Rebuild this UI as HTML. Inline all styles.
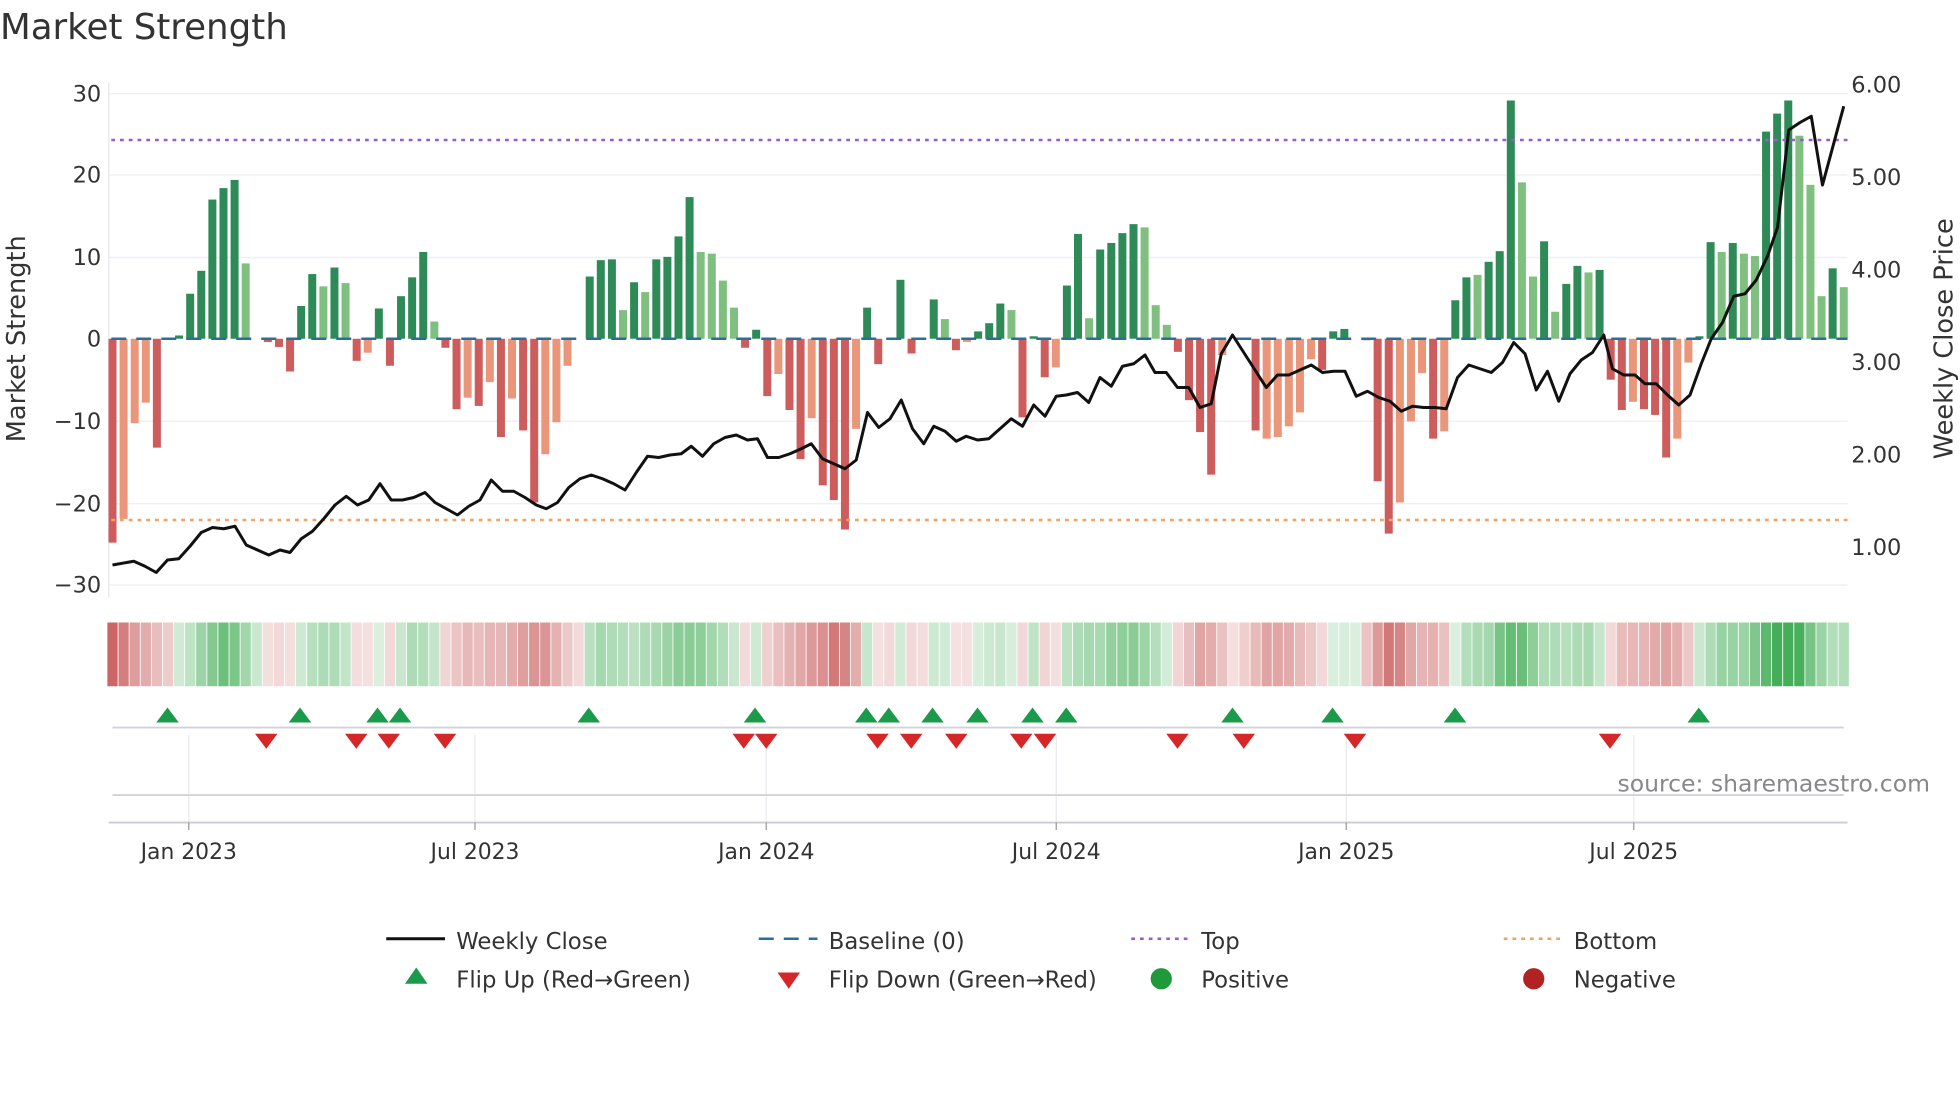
<!DOCTYPE html>
<html><head><meta charset="utf-8"><style>
html,body{margin:0;padding:0;background:#fff;}
svg{display:block;font-family:"DejaVu Sans","Liberation Sans",sans-serif;}
</style></head><body>
<svg id="c" width="1960" height="1102" viewBox="0 0 1568 881.6" xmlns="http://www.w3.org/2000/svg">
<rect width="1568" height="882" fill="#fff"/>
<text x="0" y="31" font-size="28.5" fill="#333">Market Strength</text>
<g stroke="#eef0f4" stroke-width="1.2">
<line x1="87" x2="1478" y1="75" y2="75"/><line x1="87" x2="1478" y1="140" y2="140"/><line x1="87" x2="1478" y1="206" y2="206"/>
<line x1="87" x2="1478" y1="337" y2="337"/><line x1="87" x2="1478" y1="403" y2="403"/><line x1="87" x2="1478" y1="468" y2="468"/>
</g>
<line x1="87" x2="87" y1="66" y2="478" stroke="#e6e8ec"/>
<g font-size="18" fill="#333" text-anchor="end">
<text x="81" y="81">30</text><text x="81" y="146">20</text><text x="81" y="212">10</text><text x="81" y="277">0</text>
<text x="81" y="343">−10</text><text x="81" y="409">−20</text><text x="81" y="474">−30</text>
</g>
<g font-size="18" fill="#333">
<text x="1481" y="74">6.00</text><text x="1481" y="148">5.00</text><text x="1481" y="222">4.00</text><text x="1481" y="296">3.00</text><text x="1481" y="370">2.00</text><text x="1481" y="444">1.00</text>
</g>
<text transform="translate(20,271) rotate(-90)" font-size="20.5" fill="#333" text-anchor="middle">Market Strength</text>
<text transform="translate(1562,271) rotate(-90)" font-size="20.5" fill="#333" text-anchor="middle">Weekly Close Price</text>
<g id="bars"></g>
<line x1="89" x2="1478" y1="271" y2="271" stroke="#2a6f97" stroke-width="2" stroke-dasharray="12 8"/>
<line x1="89" x2="1478" y1="112" y2="112" stroke="#9b59d6" stroke-width="2" stroke-dasharray="3 4"/>
<line x1="89" x2="1478" y1="416" y2="416" stroke="#f0a060" stroke-width="2" stroke-dasharray="3 4"/>
<polyline id="price" fill="none" stroke="#111" stroke-width="2.4" stroke-linejoin="round"/>
<g id="strip"></g>
<g stroke="#e8eaee" stroke-width="1">
<line x1="151" x2="151" y1="588" y2="660"/><line x1="380" x2="380" y1="588" y2="660"/><line x1="613" x2="613" y1="588" y2="660"/>
<line x1="845" x2="845" y1="588" y2="660"/><line x1="1077" x2="1077" y1="588" y2="660"/><line x1="1307" x2="1307" y1="588" y2="660"/>
</g>
<line x1="90" x2="1475" y1="582" y2="582" stroke="#d0d3d8" stroke-width="1.5"/>
<line x1="90" x2="1475" y1="636" y2="636" stroke="#d0d3d8" stroke-width="1.5"/>
<line x1="87" x2="1478" y1="658" y2="658" stroke="#c8cbd0" stroke-width="1.5"/>
<g stroke="#999" stroke-width="1"><line x1="151" x2="151" y1="658" y2="664"/><line x1="380" x2="380" y1="658" y2="664"/><line x1="613" x2="613" y1="658" y2="664"/><line x1="845" x2="845" y1="658" y2="664"/><line x1="1077" x2="1077" y1="658" y2="664"/><line x1="1307" x2="1307" y1="658" y2="664"/></g>
<g id="marks"></g>
<text x="1544" y="633" font-size="18.8" fill="#888" text-anchor="end">source: sharemaestro.com</text>
<g font-size="17.5" fill="#333" text-anchor="middle">
<text x="151" y="687">Jan 2023</text><text x="380" y="687">Jul 2023</text><text x="613" y="687">Jan 2024</text>
<text x="845" y="687">Jul 2024</text><text x="1077" y="687">Jan 2025</text><text x="1307" y="687">Jul 2025</text>
</g>
<g font-size="18.2" fill="#333">
<line x1="309" x2="356" y1="751" y2="751" stroke="#111" stroke-width="2.4"/><text x="365" y="759">Weekly Close</text>
<line x1="607" x2="654" y1="751" y2="751" stroke="#2a6f97" stroke-width="2" stroke-dasharray="12 8"/><text x="663" y="759">Baseline (0)</text>
<line x1="905" x2="952" y1="751" y2="751" stroke="#9b59d6" stroke-width="2" stroke-dasharray="3 4"/><text x="961" y="759">Top</text>
<line x1="1203" x2="1250" y1="751" y2="751" stroke="#f0a060" stroke-width="2" stroke-dasharray="3 4"/><text x="1259" y="759">Bottom</text>
<polygon points="333,774 342,787 324,787" fill="#1a9a4a"/><text x="365" y="790">Flip Up (Red→Green)</text>
<polygon points="622,778 640,778 631,791" fill="#d62728"/><text x="663" y="790">Flip Down (Green→Red)</text>
<circle cx="929" cy="783" r="8.5" fill="#1f9a3a"/><text x="961" y="790">Positive</text>
<circle cx="1227" cy="783" r="8.5" fill="#b22222"/><text x="1259" y="790">Negative</text>
</g>
</svg>
<script>
var V=[[-24.9,'dr'],[-22,'lr'],[-10.3,'lr'],[-7.8,'lr'],[-13.3,'dr'],[0,'z'],[0.4,'dg'],[5.5,'dg'],[8.3,'dg'],[17,'dg'],[18.4,'dg'],[19.4,'dg'],[9.2,'lg'],[0,'z'],[-0.4,'dr'],[-1,'dr'],[-4,'dr'],[4,'dg'],[7.9,'dg'],[6.4,'lg'],[8.7,'dg'],[6.8,'lg'],[-2.7,'dr'],[-1.7,'lr'],[3.7,'dg'],[-3.3,'dr'],[5.2,'dg'],[7.5,'dg'],[10.6,'dg'],[2.1,'lg'],[-1.1,'dr'],[-8.6,'dr'],[-7.2,'lr'],[-8.2,'dr'],[-5.3,'lr'],[-12,'dr'],[-7.3,'lr'],[-11.2,'dr'],[-20,'dr'],[-14.1,'lr'],[-10.2,'lr'],[-3.3,'lr'],[0,'z'],[7.6,'dg'],[9.6,'dg'],[9.7,'dg'],[3.5,'lg'],[6.9,'dg'],[5.7,'lg'],[9.7,'dg'],[10,'dg'],[12.5,'dg'],[17.3,'dg'],[10.6,'lg'],[10.4,'lg'],[7.1,'lg'],[3.8,'lg'],[-1.1,'dr'],[1.1,'dg'],[-7,'dr'],[-4.3,'lr'],[-8.7,'dr'],[-14.7,'dr'],[-9.7,'lr'],[-17.9,'dr'],[-19.7,'dr'],[-23.3,'dr'],[-11,'lr'],[3.8,'dg'],[-3.1,'dr'],[0,'z'],[7.2,'dg'],[-1.8,'dr'],[0,'z'],[4.8,'dg'],[2.4,'lg'],[-1.4,'dr'],[-0.4,'lr'],[0.9,'dg'],[1.9,'dg'],[4.3,'dg'],[3.5,'lg'],[-9.6,'dr'],[0.3,'dg'],[-4.7,'dr'],[-3.5,'lr'],[6.5,'dg'],[12.8,'dg'],[2.5,'lg'],[10.9,'dg'],[11.7,'dg'],[12.9,'dg'],[14,'dg'],[13.6,'lg'],[4.1,'lg'],[1.7,'lg'],[-1.6,'dr'],[-7.5,'dr'],[-11.4,'dr'],[-16.6,'dr'],[-2,'lr'],[0,'z'],[0,'z'],[-11.2,'dr'],[-12.2,'lr'],[-12,'lr'],[-10.7,'lr'],[-9,'lr'],[-2.5,'lr'],[-3.8,'dr'],[0.9,'dg'],[1.2,'dg'],[0,'z'],[-0.2,'lr'],[-17.4,'dr'],[-23.8,'dr'],[-20,'lr'],[-10.1,'lr'],[-4.2,'lr'],[-12.2,'dr'],[-11.3,'lr'],[4.7,'dg'],[7.5,'dg'],[7.8,'lg'],[9.4,'dg'],[10.7,'dg'],[29.1,'dg'],[19.1,'lg'],[7.6,'lg'],[11.9,'dg'],[3.3,'lg'],[6.7,'dg'],[8.9,'dg'],[8.1,'lg'],[8.4,'dg'],[-5,'dr'],[-8.7,'dr'],[-7.7,'lr'],[-8.6,'dr'],[-9.3,'dr'],[-14.5,'dr'],[-12.2,'lr'],[-2.9,'lr'],[0.3,'dg'],[11.8,'dg'],[10.6,'lg'],[11.7,'dg'],[10.4,'lg'],[10.1,'lg'],[25.3,'dg'],[27.5,'dg'],[29.1,'dg'],[24.8,'lg'],[18.8,'lg'],[5.2,'lg'],[8.6,'dg'],[6.3,'lg']];
var C={dg:'#2e8b57',lg:'#7fbf7f',dr:'#cd5c5c',lr:'#e9967a'};
var NS='http://www.w3.org/2000/svg',b=document.getElementById('bars'),s=document.getElementById('strip');
var N=V.length,dx=(1475-90)/(N-1),prev=-1;
function r(g,a){var e=document.createElementNS(NS,'rect');for(var k in a)e.setAttribute(k,a[k]);g.appendChild(e);}
for(var i=0;i<N;i++){var x=90+dx*i,v=V[i][0];
 if(V[i][1]!='z'){var h=Math.abs(v)*6.55;r(b,{x:x-3.2,y:v>0?271-h:271,width:6.4,height:Math.max(h,1),fill:C[V[i][1]]});}
 var sg=v>0?1:(v<0?-1:prev);if(v!=0)prev=sg;
 var m=0;for(var j=-1;j<=1;j++){var q=V[Math.min(N-1,Math.max(0,i+j))][0];m+=q;}m/=3;
 var a=Math.min(0.95,0.18+Math.abs(m)/32);
 var col=sg>0?'rgba(60,170,80,'+a+')':'rgba(200,90,90,'+a+')';
 r(s,{x:x-4.1,y:498,width:8.2,height:51,fill:col});
}
var P=[[90,452],[107,449],[116,453],[125,458],[134,448],[143,447],[152,437],[161,426],[170,422],[179,423],[188,421],[197,436],[206,440],[215,444],[224,440],[232,442],[241,431],[250,425],[259,415],[268,404],[277,397],[286,404],[295,400],[304,387],[313,400],[322,400],[331,398],[340,394],[348,402],[357,407],[366,412],[375,405],[384,400],[393,384],[402,393],[411,393],[420,398],[429,404],[437,407],[446,402],[455,390],[464,383],[473,380],[482,383],[491,387],[500,392],[509,378],[518,365],[527,366],[536,364],[545,363],[553,357],[562,365],[571,355],[580,350],[589,348],[598,352],[606,351],[614,366],[623,366],[632,363],[641,359],[649,355],[658,367],[667,371],[676,375],[685,368],[694,330],[703,342],[712,335],[721,320],[730,343],[739,355],[747,341],[756,345],[765,353],[773,349],[782,352],[791,351],[800,343],[809,335],[818,341],[827,324],[836,333],[845,317],[853,316],[862,314],[871,322],[880,302],[889,309],[898,293],[907,291],[916,284],[924,298],[933,298],[942,310],[951,310],[960,326],[969,323],[977,283],[986,268],[995,282],[1004,296],[1013,310],[1022,300],[1031,300],[1040,296],[1049,292],[1058,298],[1067,297],[1076,297],[1085,317],[1094,313],[1103,318],[1112,321],[1121,329],[1130,325],[1139,326],[1148,326],[1157,327],[1166,302],[1175,292],[1184,295],[1193,298],[1202,290],[1211,274],[1220,283],[1229,312],[1238,297],[1247,321],[1256,299],[1265,288],[1274,282],[1283,268],[1290,295],[1299,300],[1308,300],[1316,307],[1325,307],[1334,316],[1343,324],[1352,316],[1361,291],[1369,271],[1378,258],[1387,237],[1396,235],[1405,224],[1414,205],[1422,182],[1431,104],[1440,98],[1449,93],[1458,148],[1475,85]];
document.getElementById('price').setAttribute('points',P.map(function(p){return p.join(',')}).join(' '));
var mk=document.getElementById('marks');
[134,240,302,320,471,604,693,711,746,782,826,853,986,1066,1164,1359].forEach(function(x){var e=document.createElementNS(NS,'polygon');e.setAttribute('points',(x)+',566 '+(x+9)+',578 '+(x-9)+',578');e.setAttribute('fill','#1a9a4a');mk.appendChild(e);});
[213,285,311,356,595,613,702,729,765,817,836,942,995,1084,1288].forEach(function(x){var e=document.createElementNS(NS,'polygon');e.setAttribute('points',(x-9)+',587 '+(x+9)+',587 '+x+',599');e.setAttribute('fill','#d62728');mk.appendChild(e);});
</script>
</body></html>
